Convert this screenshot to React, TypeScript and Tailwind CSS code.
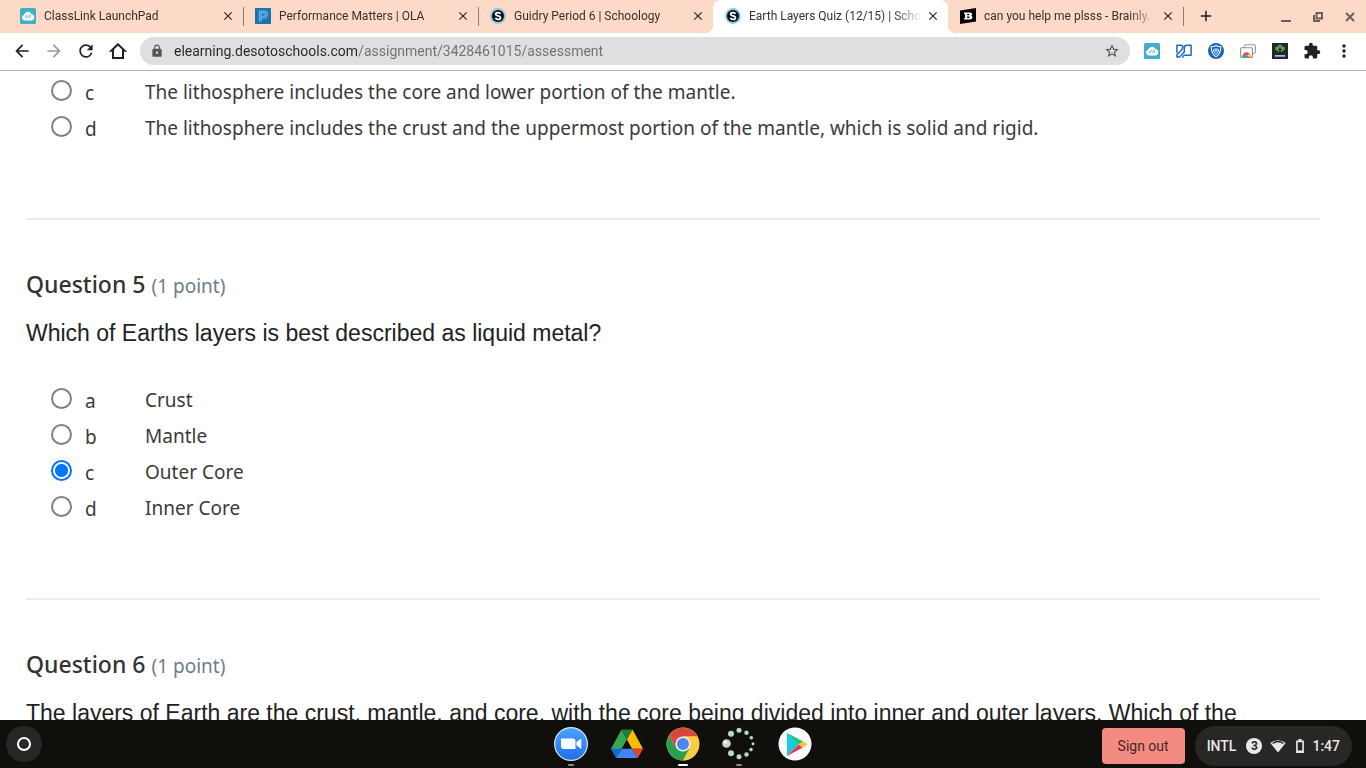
import React, { useState } from 'react';
import {
  MdAdd,
  MdArrowBack,
  MdArrowForward,
  MdClose,
  MdExtension,
  MdLock,
  MdMoreVert,
  MdRefresh,
  MdStarBorder,
} from 'react-icons/md';

const ClassLinkIcon = () => (
  <svg viewBox="0 0 16 16" className="size-4 shrink-0">
    <rect width="16" height="16" rx="1.5" fill="#43AFC5" />
    <path d="M4.800 12.500a2.800 2.800 0 0 1-.8-5.500A3.900 3.900 0 0 1 11.300 6a3.300 3.300 0 0 1 .4 6.500z" fill="#fff" />
    <path d="M6.500 10.300a1.300 1.300 0 1 1 1.500-1.900l.7.900a1.200 1.200 0 1 0 .3-2.200" fill="none" stroke="#43AFC5" strokeWidth="0.900" />
  </svg>
);

const PerformanceIcon = () => (
  <svg viewBox="0 0 16 16" className="size-4 shrink-0">
    <rect width="16" height="16" fill="#1E72B0" />
    <path d="M5.300 13.500V4h3.500a2.600 2.600 0 0 1 0 5.200H6.500" fill="none" stroke="#6BB9EA" strokeWidth="3" />
    <path d="M5.300 13.500V4h3.500a2.600 2.600 0 0 1 0 5.200H6.500" fill="none" stroke="#3F94D0" strokeWidth="1.200" />
  </svg>
);

const SchoologyIcon = () => (
  <svg viewBox="0 0 16 16" className="size-4 shrink-0">
    <circle cx="8" cy="8" r="7.9" fill="#8CC6DE" />
    <circle cx="8" cy="8" r="6.1" fill="#0B1218" />
    <path
      d="M10.500 5.900C10.100 5 9.100 4.600 8 4.600c-1.300 0-2.400.6-2.400 1.600 0 2.300 4.900 1.200 4.900 3.500 0 1-1.100 1.700-2.500 1.700-1.300 0-2.200-.5-2.600-1.500"
      fill="none"
      stroke="#fff"
      strokeWidth="1.700"
    />
  </svg>
);

const BrainlyIcon = () => (
  <svg viewBox="0 0 16 16" className="size-4 shrink-0">
    <path d="M0 2.500 16 0v13.500L0 16z" fill="#000" />
    <path
      fillRule="evenodd"
      d="M4 4.600h5.500c1.700 0 2.600.6 2.600 1.700 0 .8-.5 1.300-1.200 1.500.9.2 1.500.7 1.500 1.700 0 1.300-1 2-2.900 2H4v-1.300h1V5.900H4zM7.200 6v1.300h1.500c.9 0 .9-1.300 0-1.300zm0 2.500v1.600h1.700c1 0 1-1.600 0-1.600z"
      fill="#fff"
    />
  </svg>
);

const HomeIcon = () => (
  <svg viewBox="0 0 20 20" className="size-5">
    <path d="M10 3.300 3.300 9.800H5V17h10V9.800h1.700z" fill="none" stroke="#202124" strokeWidth="2" />
  </svg>
);

const ReadWriteIcon = () => (
  <svg viewBox="0 0 16 16" className="size-4">
    <g fill="none" stroke="#1A6BC4" strokeWidth="1.500" strokeLinejoin="round" strokeLinecap="round">
      <path d="M.9 9.500V2.200h3.600c1.600 0 2.500 1 2.300 2.400-.1 1-.8 1.700-1.600 2.600L.9 12v2h2.600L8.300 9" />
      <path d="M6.800 14.200c.2-1.200.9-2 2-2h6.300V2.200H11c-1.600 0-2.700.8-2.700 2.300V9" />
    </g>
  </svg>
);

const ShieldIcon = () => (
  <svg viewBox="0 0 16 16" className="size-4">
    <circle cx="8" cy="8" r="8" fill="#1565C0" />
    <path d="M8 2.500c1.600 1 3.200 1.300 4.800 1.300 0 4.800-1.300 8-4.800 9.900-3.500-1.900-4.800-5.100-4.800-9.900 1.600 0 3.200-.3 4.800-1.300z" fill="none" stroke="#fff" strokeWidth="1.100" />
    <path d="M5.500 6.500c1-.1 1.800-.4 2.500-.8.7.4 1.500.7 2.500.8-.1 2.200-.8 3.500-2.500 4.700-1.700-1.200-2.400-2.500-2.500-4.700z" fill="none" stroke="#fff" strokeWidth="1" />
    <circle cx="8" cy="8" r="0.900" fill="#fff" />
  </svg>
);

const StoreCardsIcon = () => (
  <svg viewBox="0 0 16 16" className="size-4">
    <rect x="4.200" y="1.800" width="11.200" height="8.500" rx="1" fill="#fff" stroke="#8C9196" strokeWidth="1" />
    <rect x="0.600" y="4.800" width="11.800" height="9.600" rx="1" fill="#fff" stroke="#8C9196" strokeWidth="1.100" />
    <path d="M2.300 13.900a4.200 4.200 0 0 1 1.300-3.300l2.900 3.300z" fill="#34A853" />
    <path d="M3 11.200a4.200 4.200 0 0 1 7 0l-3.500 1.300z" fill="#EA4335" />
    <path d="M10 11.200c.6.900.7 1.800.6 2.700H7z" fill="#FBBC04" />
    <path d="M4.700 13.900a1.800 1.800 0 0 1 3.600 0z" fill="#4285F4" />
  </svg>
);

const TreeIcon = () => (
  <svg viewBox="0 0 16 16" className="size-4">
    <rect width="16" height="16" fill="#1F2A30" />
    <g fill="#6F9E4D">
      <circle cx="8" cy="3.500" r="2" />
      <circle cx="5" cy="5.500" r="1.900" />
      <circle cx="11" cy="5.500" r="1.900" />
      <circle cx="6.500" cy="7.500" r="1.300" />
      <circle cx="9.700" cy="7.500" r="1.300" />
    </g>
    <path d="M8 4.500v6.500M8 8l-2-2M8 8l2-2" stroke="#2A3B2C" strokeWidth="0.800" />
    <path d="M3 12.800h10" stroke="#DDE3E0" strokeWidth="1.800" strokeDasharray="1.600 .5" />
  </svg>
);

const ZoomIcon = () => (
  <svg viewBox="0 0 34 34" className="size-[34px]">
    <defs>
      <linearGradient id="zoomFill" x1="0" y1="0" x2="0" y2="1">
        <stop offset="0" stopColor="#4AA3FF" />
        <stop offset="1" stopColor="#1F6FE5" />
      </linearGradient>
    </defs>
    <circle cx="17" cy="17" r="17" fill="#D8E8FA" />
    <circle cx="17" cy="17" r="15.800" fill="url(#zoomFill)" />
    <path d="M7 11.500h11.500a3 3 0 0 1 3 3v7.500H10a3 3 0 0 1-3-3zM22.500 15l4.800-3.500v10.500l-4.800-3.500z" fill="#fff" />
  </svg>
);

const DriveIcon = () => (
  <svg viewBox="0 0 34 34" className="size-[34px]">
    <path d="M11.500 2.500 17 12.500 6.300 31 1 21.700z" fill="#34A853" />
    <path d="M11.500 2.500h11L17 12.500z" fill="#188038" />
    <path d="M22.500 2.500 33 21.700H22L17 12.500z" fill="#FBBC04" />
    <path d="M1 21.700h11L6.300 31z" fill="#1967D2" />
    <path d="M12 21.700h10L27.700 31H6.300z" fill="#4285F4" />
    <path d="M22 21.700h11L27.700 31z" fill="#EA4335" />
  </svg>
);

const ChromeIcon = () => (
  <svg viewBox="0 0 34 34" className="size-[34px]">
    <circle cx="17" cy="17" r="16.500" fill="#FBCB43" />
    <path d="M17 17 2.700 8.700A16.500 16.500 0 0 1 31.300 9.500H17z" fill="#D9473A" />
    <path d="m2.700 8.700 7.700 12.500L17 17z" fill="#D9473A" />
    <path d="M2.700 8.700A16.500 16.500 0 0 0 17 33.500l6.700-12.300L17 24l-6.600-2.800z" fill="#2F9E55" />
    <path d="M17 9.500h14.300A16.500 16.500 0 0 1 17 33.500l6.700-12.300z" fill="#FBCB43" />
    <circle cx="17" cy="17" r="7.600" fill="#F1F1F1" />
    <circle cx="17" cy="17" r="6" fill="#4C85EE" />
  </svg>
);

const SpinnerIcon = () => (
  <svg viewBox="0 0 34 34" className="size-[34px]">
    <circle cx="4.500" cy="16.500" r="4.300" fill="#CFCFCF" />
    <circle cx="3.500" cy="15.300" r="1.800" fill="#F5F5F5" />
    <g fill="#B5DDB9">
      <circle cx="9" cy="6.800" r="3" />
      <circle cx="17" cy="3.300" r="2.500" />
      <circle cx="24.500" cy="5.700" r="2.200" />
      <circle cx="29.300" cy="10.800" r="1.800" />
      <circle cx="31" cy="16.800" r="1.500" />
      <circle cx="29" cy="22.600" r="1.800" />
      <circle cx="24.500" cy="27.500" r="2.200" />
      <circle cx="17" cy="29.800" r="2.500" />
      <circle cx="9" cy="26.300" r="3" />
    </g>
  </svg>
);

const PlayIcon = () => (
  <svg viewBox="0 0 34 34" className="size-[34px]">
    <circle cx="17" cy="17" r="16.500" fill="#FAFAFA" />
    <path d="M9 6v23l11.500-11.500z" fill="#20C8E0" />
    <path d="M9 6v11.500h11.500z" fill="#14D0D8" />
    <path d="m9 6 16 8.500-4.500 3z" fill="#1FC072" />
    <path d="m24.500 14.200 5 3.300-5 3.300-4-3.300z" fill="#FBC02D" />
    <path d="m9 29 15.500-8.200-4-3.300z" fill="#E5394F" />
  </svg>
);

const tabs = [
  { title: 'ClassLink LaunchPad', icon: <ClassLinkIcon />, divider: true },
  { title: 'Performance Matters | OLA', icon: <PerformanceIcon />, divider: true },
  { title: 'Guidry Period 6 | Schoology', icon: <SchoologyIcon /> },
  { title: 'Earth Layers Quiz (12/15) | Scho', icon: <SchoologyIcon />, active: true },
  { title: 'can you help me plsss - Brainly.', icon: <BrainlyIcon />, divider: true },
];

const extensions = [
  { name: 'ClassLink', icon: <ClassLinkIcon /> },
  { name: 'Read and Write', icon: <ReadWriteIcon /> },
  { name: 'Shield', icon: <ShieldIcon /> },
  { name: 'Web Store', icon: <StoreCardsIcon /> },
  { name: 'Tree', icon: <TreeIcon /> },
  { name: 'Extensions', icon: <MdExtension className="size-[18px] text-[#202124]" /> },
  { name: 'Menu', icon: <MdMoreVert className="size-5 text-[#202124]" /> },
];

const apps = [
  { name: 'Zoom', icon: <ZoomIcon />, mark: 'w-1.5 bg-[#8a8a88]' },
  { name: 'Drive', icon: <DriveIcon />, mark: 'w-0' },
  { name: 'Chrome', icon: <ChromeIcon />, mark: 'w-2.5 bg-white' },
  { name: 'Loading', icon: <SpinnerIcon />, mark: 'w-1.5 bg-[#8a8a88]' },
  { name: 'Play Store', icon: <PlayIcon />, mark: 'w-0' },
];

function TabStrip() {
  return (
    <div className="flex h-[33px] shrink-0 bg-[#fdd9c7] pl-2">
      {tabs.map((tab) => (
        <div
          key={tab.title}
          className={
            tab.active
              ? "relative flex w-[235px] min-w-0 items-center rounded-t-lg bg-white pr-2 pb-0.5 pl-3 before:absolute before:bottom-0 before:-left-2 before:size-2 before:bg-[radial-gradient(circle_at_0_0,#fdd9c7_8px,#fff_8px)] before:content-[''] after:absolute after:-right-2 after:bottom-0 after:size-2 after:bg-[radial-gradient(circle_at_100%_0,#fdd9c7_8px,#fff_8px)] after:content-['']"
              : 'relative flex w-[235px] min-w-0 items-center pr-2 pb-0.5 pl-3'
          }
        >
          {tab.icon}
          <span className="ml-2 min-w-0 flex-1 overflow-hidden mask-[linear-gradient(to_right,#000_calc(100%-28px),transparent)] text-xs whitespace-nowrap text-[#3b2f2b]">
            {tab.title}
          </span>
          <button type="button" aria-label={`Close ${tab.title}`} className="ml-1 shrink-0 text-[#2b2523]">
            <MdClose className="size-3.5" />
          </button>
          {tab.divider && <span className="absolute top-[7px] -right-px h-[19px] w-px bg-[#8f7f79]" />}
        </div>
      ))}
      <button type="button" aria-label="New tab" className="flex w-[46px] items-center justify-center pb-0.5 text-[#202124]">
        <MdAdd className="size-[18px]" />
      </button>
      <div className="ml-auto flex text-[#6b5f5a]">
        <button type="button" aria-label="Minimize" className="flex w-8 items-center justify-center">
          <svg viewBox="0 0 12 12" className="size-3">
            <path d="M1 10h10" stroke="currentColor" strokeWidth="2" />
          </svg>
        </button>
        <button type="button" aria-label="Restore" className="flex w-8 items-center justify-center">
          <svg viewBox="0 0 12 12" className="size-3" fill="none" stroke="currentColor" strokeWidth="2">
            <path d="M4.500 2H10v5.500H4.500zM2 4v6h6" />
          </svg>
        </button>
        <button type="button" aria-label="Close window" className="flex w-8 items-center justify-center">
          <svg viewBox="0 0 12 12" className="size-3">
            <path d="m2 2 8 8M10 2l-8 8" stroke="currentColor" strokeWidth="2" />
          </svg>
        </button>
      </div>
    </div>
  );
}

function Toolbar() {
  return (
    <div className="flex h-[38px] shrink-0 items-center gap-1.5 border-b border-[#b0b0b0] bg-white px-1.5 pb-px">
      <nav className="flex text-[#202124]">
        <button type="button" aria-label="Back" className="flex size-8 items-center justify-center">
          <MdArrowBack className="size-5" />
        </button>
        <button type="button" aria-label="Forward" className="flex size-8 items-center justify-center text-[#9a9a9a]">
          <MdArrowForward className="size-5" />
        </button>
        <button type="button" aria-label="Reload" className="flex size-8 items-center justify-center">
          <MdRefresh className="size-5" />
        </button>
        <button type="button" aria-label="Home" className="flex size-8 items-center justify-center">
          <HomeIcon />
        </button>
      </nav>
      <div className="flex h-7 min-w-0 flex-1 items-center rounded-full bg-[#dfdfdf] px-2.5">
        <MdLock className="size-3.5 shrink-0 text-[#55565a]" />
        <input
          type="text"
          aria-label="Address"
          defaultValue="elearning.desotoschools.com/assignment/3428461015/assessment"
          className="ml-2.5 min-w-0 flex-1 bg-[linear-gradient(to_right,#26272b_183px,#707070_183px)] bg-clip-text text-sm text-transparent outline-none"
        />
        <button type="button" aria-label="Bookmark this page" className="text-[#4a4b4f]">
          <MdStarBorder className="size-4" />
        </button>
      </div>
      <div className="flex">
        {extensions.map((item) => (
          <button key={item.name} type="button" aria-label={item.name} className="flex size-8 items-center justify-center">
            {item.icon}
          </button>
        ))}
      </div>
    </div>
  );
}

type Option = { letter: string; text: string };

function Options({ name, options, initial }: { name: string; options: Option[]; initial?: string }) {
  const [picked, setPicked] = useState(initial);

  return (
    <div role="radiogroup" aria-label={name}>
      {options.map((option) => (
        <label key={option.letter} className="flex h-9 items-center pl-[25px] text-[19px] text-[#3a3a3a]">
          <input
            type="radio"
            name={name}
            checked={picked === option.letter}
            onChange={() => setPicked(option.letter)}
            className="size-[21px] shrink-0 appearance-none rounded-full border-2 border-[#808080] bg-white checked:border-[#0075ff] checked:bg-[radial-gradient(circle,#0075ff_6px,#fff_7px)]"
          />
          <span className="w-[73px] shrink-0 pt-1.5 pl-[13px]">{option.letter}</span>
          <span className="pt-1">{option.text}</span>
        </label>
      ))}
    </div>
  );
}

function QuestionTitle({ number }: { number: number }) {
  return (
    <h2 className="flex h-8 items-baseline gap-1.5 text-[23px] leading-8 font-medium text-[#333333]">
      <span>Question {number}</span>
      <span className="text-[19px] font-normal text-[#6d7b8a]">(1 point)</span>
    </h2>
  );
}

function Quiz() {
  return (
    <main className="min-h-0 flex-1 overflow-hidden pt-px pr-[46px] pl-[26px] font-['Noto_Sans','Open_Sans',sans-serif]">
      <section className="pb-[74px]">
        <Options
          name="Question 4"
          options={[
            { letter: 'c', text: 'The lithosphere includes the core and lower portion of the mantle.' },
            {
              letter: 'd',
              text: 'The lithosphere includes the crust and the uppermost portion of the mantle, which is solid and rigid.',
            },
          ]}
        />
      </section>

      <section className="border-t-2 border-[#ececec] pt-12 pb-[74px]">
        <QuestionTitle number={5} />
        <p className="mt-[17px] mb-[31px] font-['Liberation_Sans',Arial,sans-serif] text-[23px] leading-8 text-[#222222]">
          Which of Earths layers is best described as liquid metal?
        </p>
        <Options
          name="Question 5"
          initial="c"
          options={[
            { letter: 'a', text: 'Crust' },
            { letter: 'b', text: 'Mantle' },
            { letter: 'c', text: 'Outer Core' },
            { letter: 'd', text: 'Inner Core' },
          ]}
        />
      </section>

      <section className="border-t-2 border-[#ececec] pt-12">
        <QuestionTitle number={6} />
        <p className="mt-[17px] font-['Liberation_Sans',Arial,sans-serif] text-[23px] leading-8 text-[#222222]">
          The layers of Earth are the crust, mantle, and core, with the core being divided into inner and outer layers. Which of the
        </p>
      </section>
    </main>
  );
}

function Shelf() {
  return (
    <footer className="grid h-12 shrink-0 grid-cols-[1fr_auto_1fr] items-center bg-[#100f0b]">
      <button type="button" aria-label="Launcher" className="ml-1.5 flex size-9 items-center justify-center rounded-full bg-[#282725]">
        <span className="size-3.5 rounded-full border-2 border-white" />
      </button>
      <div className="flex h-12 gap-[22px]">
        {apps.map((app) => (
          <button key={app.name} type="button" aria-label={app.name} className="flex flex-col items-center justify-between pt-[7px] pb-0.5">
            {app.icon}
            <span className={`h-0.5 rounded-full ${app.mark}`} />
          </button>
        ))}
      </div>
      <div className="mr-3.5 flex items-center justify-end gap-2.5 pt-1">
        <button type="button" className="h-9 rounded-sm bg-[#f28b82] px-4 text-sm text-[#4a2320]">
          Sign out
        </button>
        <button type="button" className="flex h-10 items-center rounded-full bg-[#282725] px-3 text-sm font-medium text-[#e8e8e8]">
          INTL
          <span className="ml-2.5 flex size-4 items-center justify-center rounded-full bg-[#e8eaed] text-xs font-bold text-[#282725]">3</span>
          <svg viewBox="0 0 16 14" className="ml-2 h-3.5 w-4">
            <path d="M8 13.500.3 3.900a12.200 12.200 0 0 1 15.400 0z" fill="#e8eaed" />
            <path d="M2.600 4.500a9 9 0 0 1 10.800 0" fill="none" stroke="#282725" strokeWidth="1.300" />
          </svg>
          <svg viewBox="0 0 8 14" className="ml-2.5 h-3.5 w-2">
            <path d="M2.500 0h3v2h-3z" fill="#e8eaed" />
            <path d="M.9 2.400h6.200v10.700H.9z" fill="none" stroke="#e8eaed" strokeWidth="1.600" />
            <path d="M1 11.500h6V13H1z" fill="#e8eaed" />
          </svg>
          <span className="ml-2">1:47</span>
        </button>
      </div>
    </footer>
  );
}

export default function App() {
  return (
    <div className="flex h-screen flex-col overflow-hidden bg-white font-[Roboto,sans-serif]">
      <TabStrip />
      <Toolbar />
      <Quiz />
      <Shelf />
    </div>
  );
}
